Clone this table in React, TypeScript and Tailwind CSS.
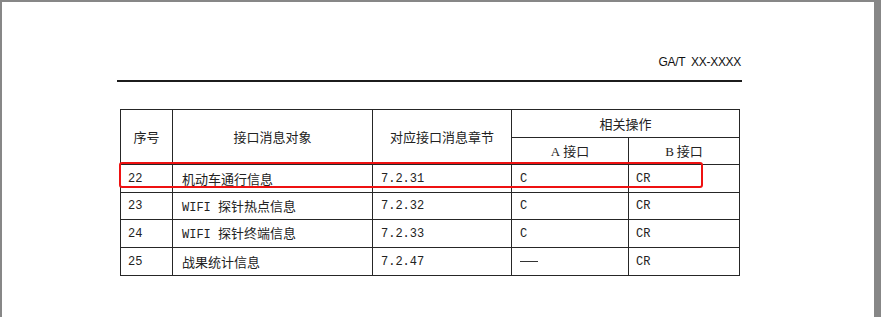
import React from 'react'

const CJK = "font-['Noto_Sans_CJK_SC',sans-serif]"
const MONO = "font-['Liberation_Mono','Noto_Sans_CJK_SC',monospace]"

const ROWS = [
  { no: '22', prefix: '', name: '机动车通行信息', sec: '7.2.31', a: 'C', b: 'CR', h: 'h-[28px]' },
  { no: '23', prefix: 'WIFI ', name: '探针热点信息', sec: '7.2.32', a: 'C', b: 'CR', h: 'h-[27px]' },
  { no: '24', prefix: 'WIFI ', name: '探针终端信息', sec: '7.2.33', a: 'C', b: 'CR', h: 'h-[28px]' },
  { no: '25', prefix: '', name: '战果统计信息', sec: '7.2.47', a: '', b: 'CR', h: 'h-[28px]' },
]

const cell = 'border border-[#262626] p-0'

export default function App() {
  return (
    <div className="w-[881px] h-[317px] bg-[#878787] pt-[2px] pl-[2px] pr-[7px] overflow-hidden">
      <div className="relative h-full bg-white text-[#222]">
        <div className="ml-[115px] w-[625px] pt-[52px]">
          {/* running header */}
          <div className="flex justify-end pr-[1px] h-[16px] items-center text-[12px] font-['Liberation_Sans',sans-serif] tracking-[-0.3px] whitespace-pre text-[#111]">
            GA/T  XX-XXXX
          </div>
          <div className="mt-[10px] h-[2px] bg-[#1c1c1c]" />

          <table className={`mt-[27px] ml-[3px] w-[619px] table-fixed border-collapse ${CJK} text-[13px]`}>
            <colgroup>
              <col className="w-[52px]" />
              <col className="w-[200px]" />
              <col className="w-[139px]" />
              <col className="w-[117px]" />
              <col className="w-[111px]" />
            </colgroup>
            <tbody>
              <tr className="h-[28px]">
                <td rowSpan={2} className={`${cell} text-center`}>序号</td>
                <td rowSpan={2} className={`${cell} text-center`}>接口消息对象</td>
                <td rowSpan={2} className={`${cell} text-center`}>对应接口消息章节</td>
                <td colSpan={2} className={`${cell} text-center`}>相关操作</td>
              </tr>
              <tr className="h-[27px]">
                <td className={`${cell} text-center`}>
                  <span className="font-['Liberation_Serif',serif]">A</span> 接口
                </td>
                <td className={`${cell} text-center`}>
                  <span className="font-['Liberation_Serif',serif]">B</span> 接口
                </td>
              </tr>
              {ROWS.map(r => (
                <tr key={r.no} className={r.h}>
                  <td className={`${cell} pl-[7px] ${MONO} text-[12px]`}>{r.no}</td>
                  <td className={`${cell} pl-[9px]`}>
                    {r.prefix && <span className={`${MONO} text-[12px]`}>{r.prefix}</span>}
                    {r.name}
                  </td>
                  <td className={`${cell} pl-[8px] ${MONO} text-[12px]`}>{r.sec}</td>
                  <td className={`${cell} pl-[8px] ${MONO} text-[12px]`}>
                    {r.a ? r.a : <span className="inline-block align-middle w-[18px] h-[1px] bg-[#333]" />}
                  </td>
                  <td className={`${cell} pl-[7px] ${MONO} text-[12px]`}>{r.b}</td>
                </tr>
              ))}
            </tbody>
          </table>
        </div>

        {/* red highlight annotation */}
        <div className="absolute left-[117px] top-[160px] w-[584px] h-[26px] border-2 border-[#ee1111] rounded-[3px]" />
      </div>
    </div>
  )
}
